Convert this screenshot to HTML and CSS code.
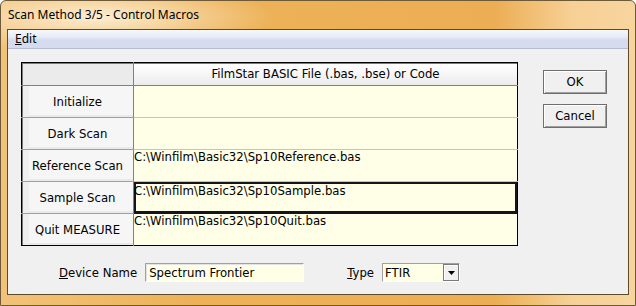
FILE: index.html
```html
<!DOCTYPE html>
<html>
<head>
<meta charset="utf-8">
<link rel="stylesheet" href="styles.css">
</head>
<body>
<div class="window">
  <div class="titlebar">Scan Method 3/5 - Control Macros</div>
  <div class="client">
    <div class="menubar"><span class="menu-item"><u>E</u>dit</span></div>
    <div class="main">
      <table class="grid">
        <tr class="head">
          <th class="corner"></th>
          <th class="colhead">FilmStar BASIC File (.bas, .bse) or Code</th>
        </tr>
        <tr class="row">
          <th class="rowhead">Initialize</th>
          <td class="cell"></td>
        </tr>
        <tr class="row">
          <th class="rowhead">Dark Scan</th>
          <td class="cell"></td>
        </tr>
        <tr class="row">
          <th class="rowhead">Reference Scan</th>
          <td class="cell">C:\Winfilm\Basic32\Sp10Reference.bas</td>
        </tr>
        <tr class="row">
          <th class="rowhead">Sample Scan</th>
          <td class="cell selected">C:\Winfilm\Basic32\Sp10Sample.bas</td>
        </tr>
        <tr class="row last">
          <th class="rowhead">Quit MEASURE</th>
          <td class="cell">C:\Winfilm\Basic32\Sp10Quit.bas</td>
        </tr>
      </table>
      <div class="buttons">
        <button class="btn">OK</button>
        <button class="btn">Cancel</button>
      </div>
    </div>
    <div class="bottom">
      <label class="lbl"><u>D</u>evice Name</label>
      <div class="textbox">Spectrum Frontier</div>
      <label class="lbl type-lbl"><u>T</u>ype</label>
      <div class="combo">
        <span class="combo-text">FTIR</span>
        <span class="combo-btn"><svg width="7" height="4" viewBox="0 0 7 4"><path d="M0 0H7L3.5 4Z" fill="#000"/></svg></span>
      </div>
    </div>
  </div>
</div>
</body>
</html>
```

FILE: styles.css
```css
html, body {
  margin: 0;
  padding: 0;
  background: #ffffff;
}

.window {
  box-sizing: border-box;
  width: 636px;
  height: 306px;
  border: 1px solid #6e5a38;
  border-radius: 6px 6px 0 0;
  padding: 0 6px 10px 6px;
  display: flex;
  flex-direction: column;
  background:
    radial-gradient(ellipse 180px 34px at 95px 16px, rgba(253, 240, 215, 0.95), rgba(253, 240, 215, 0) 100%),
    linear-gradient(90deg, #f2c27a 0%, #edb258 30%, #ecae55 78%, #f6d095 90%, #f7d59d 100%);
}

.titlebar {
  height: 28px;
  flex: none;
  box-sizing: border-box;
  padding: 6px 0 0 1px;
  font-family: "Noto Sans", sans-serif;
  font-size: 12px;
  line-height: 16px;
  color: #000;
}

.client {
  flex: 1;
  border: 1px solid #5c4a2c;
  background: #f0f0f0;
  display: flex;
  flex-direction: column;
}

.menubar {
  height: 18px;
  border-bottom: 1px solid #b6bccc;
  background: linear-gradient(180deg, #f6f8fc 0%, #e6ebf6 40%, #d6dcee 55%, #d5dbed 100%);
  font-family: "Noto Sans", sans-serif;
  font-size: 12px;
  line-height: 17px;
}

.menu-item {
  display: inline-block;
  padding-left: 7px;
}

.main {
  display: flex;
  align-items: flex-start;
  padding: 13px 0 0 13px;
}

.grid {
  border-collapse: collapse;
  border: 1px solid #000;
  font-family: "DejaVu Sans", Verdana, sans-serif;
  font-size: 11.7px;
  table-layout: fixed;
  width: 497px;
}

.grid th, .grid td {
  padding: 0;
  font-weight: normal;
}

.head {
  height: 23px;
}

.corner {
  width: 111px;
  background: #ebebeb;
  border-right: 1px solid #808080;
  border-bottom: 1px solid #808080;
  box-shadow: inset 1px 1px 0 #7a7a7a;
}

.colhead {
  background: linear-gradient(180deg, #ffffff 0%, #f7f7f7 45%, #ebebeb 100%);
  border-bottom: 1px solid #808080;
  text-align: center;
  color: #000;
  box-shadow: inset 0 1px 0 #7a7a7a;
}

.row {
  height: 32px;
}

.rowhead {
  background: #f6f6f7;
  border-right: 1px solid #808080;
  border-bottom: 1px solid #a0a0a0;
  box-shadow: inset 1px 0 0 #7a7a7a, inset 7px 0 0 #efefef, inset 0 -2px 0 #e9e9e9;
  text-align: center;
  vertical-align: middle;
  color: #000;
  padding-top: 1px;
}

.cell {
  background: #fffee6;
  border-bottom: 1px solid #c4c4c4;
  vertical-align: top;
  padding: 3px 0 0 3px;
  white-space: nowrap;
  color: #000;
  line-height: 14px;
}

.last .cell, .last .rowhead {
  border-bottom: none;
}

.cell.selected {
  box-shadow: inset 0 0 0 2px #14141e;
  border-bottom: 1px solid #14141e;
  padding-top: 2px;
}

.buttons {
  display: flex;
  flex-direction: column;
  gap: 10px;
  margin: 8px 0 0 25px;
}

.btn {
  box-sizing: border-box;
  width: 64px;
  height: 24px;
  padding: 0;
  margin: 0;
  font-family: "DejaVu Sans", Verdana, sans-serif;
  font-size: 11.7px;
  color: #000;
  background: #f0f0f0;
  border: 1px solid #6e6e6e;
  box-shadow: inset 1px 1px 0 #ffffff, inset -1px -1px 0 #a0a0a0;
}

.bottom {
  display: flex;
  align-items: center;
  margin: 17px 0 0 51px;
  font-family: "DejaVu Sans", Verdana, sans-serif;
  font-size: 11.7px;
}

.lbl {
  color: #000;
}

.textbox {
  box-sizing: border-box;
  width: 159px;
  height: 19px;
  margin-left: 8px;
  padding: 2px 0 0 3px;
  background: #fffee6;
  border-top: 1px solid #a0a0a0;
  border-left: 1px solid #a0a0a0;
  border-right: 1px solid #ffffff;
  border-bottom: 1px solid #ffffff;
  box-shadow: inset 1px 1px 0 #e3e3e3;
  line-height: 14px;
}

.type-lbl {
  margin-left: 43px;
}

.combo {
  box-sizing: border-box;
  width: 78px;
  height: 19px;
  margin-left: 8px;
  display: flex;
  background: #fffee6;
  border-top: 1px solid #a0a0a0;
  border-left: 1px solid #a0a0a0;
  border-right: 1px solid #ffffff;
  border-bottom: 1px solid #ffffff;
}

.combo-text {
  flex: 1;
  padding: 2px 0 0 2px;
  line-height: 14px;
}

.combo-btn {
  box-sizing: border-box;
  width: 16px;
  height: 17px;
  background: #f0f0f0;
  border: 1px solid #7a7a7a;
  box-shadow: inset 1px 1px 0 #ffffff;
  display: flex;
  align-items: center;
  justify-content: center;
}
```
